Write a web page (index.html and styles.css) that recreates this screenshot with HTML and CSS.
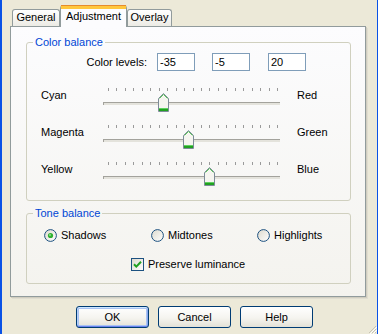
FILE: index.html
```html
<!DOCTYPE html>
<html lang="en">
<head>
    <meta charset="UTF-8">
    <title>Adjustment</title>
    <link rel="stylesheet" href="styles.css">
</head>
<body>

<div class="window">
    <!-- Tab strip -->
    <div class="tabs">
        <div class="tab tab-general">General</div>
        <div class="tab tab-active">Adjustment</div>
        <div class="tab tab-overlay">Overlay</div>
    </div>

    <div class="panel">
        <fieldset class="group color-group">
            <legend>Color balance</legend>

            <div class="levels">
                <span class="levels-label">Color levels:</span>
                <input class="level" type="text" value="-35">
                <input class="level level-2" type="text" value="-5">
                <input class="level level-3" type="text" value="20">
            </div>

            <div class="slider-row first">
                <span class="name">Cyan</span>
                <svg class="slider" width="180" height="26" viewBox="0 0 180 26">
                    <use href="#ticks"/>
                    <use href="#track"/>
                    <g transform="translate(55 0)"><use href="#thumb"/></g>
                </svg>
                <span class="name right">Red</span>
            </div>
            <div class="slider-row">
                <span class="name">Magenta</span>
                <svg class="slider" width="180" height="26" viewBox="0 0 180 26">
                    <use href="#ticks"/>
                    <use href="#track"/>
                    <g transform="translate(80 0)"><use href="#thumb"/></g>
                </svg>
                <span class="name right">Green</span>
            </div>
            <div class="slider-row">
                <span class="name">Yellow</span>
                <svg class="slider" width="180" height="26" viewBox="0 0 180 26">
                    <use href="#ticks"/>
                    <use href="#track"/>
                    <g transform="translate(101 0)"><use href="#thumb"/></g>
                </svg>
                <span class="name right">Blue</span>
            </div>
        </fieldset>

        <fieldset class="group tone-group">
            <legend>Tone balance</legend>
            <div class="radios">
                <label class="radio">
                    <svg width="13" height="13" viewBox="0 0 13 13"><use href="#radio"/><circle cx="6.5" cy="6.5" r="2.6" fill="#2fb12f"/><circle cx="6" cy="6" r="1" fill="#8fe08f"/></svg>
                    <span>Shadows</span>
                </label>
                <label class="radio">
                    <svg width="13" height="13" viewBox="0 0 13 13"><use href="#radio"/></svg>
                    <span>Midtones</span>
                </label>
                <label class="radio">
                    <svg width="13" height="13" viewBox="0 0 13 13"><use href="#radio"/></svg>
                    <span>Highlights</span>
                </label>
            </div>
            <label class="check">
                <svg width="13" height="13" viewBox="0 0 13 13">
                    <rect x="0.5" y="0.5" width="12" height="12" fill="url(#boxfill)" stroke="#1c5180"/>
                    <path d="M3 6.2 L5.3 8.6 L10 3.8" fill="none" stroke="#21a121" stroke-width="2"/>
                </svg>
                <span>Preserve luminance</span>
            </label>
        </fieldset>
    </div>

    <div class="buttons">
        <button class="btn btn-default">OK</button>
        <button class="btn">Cancel</button>
        <button class="btn">Help</button>
    </div>

    <svg class="grip" width="10" height="10" viewBox="0 0 10 10">
        <path d="M9 2 L2 9 M9 5 L5 9 M9 8 L8 9" stroke="#c6c3b4" stroke-width="1"/>
        <path d="M10 3 L3 10 M10 6 L6 10" stroke="#ffffff" stroke-width="1"/>
    </svg>
</div>

<!-- shared shapes -->
<svg class="defs" width="0" height="0">
    <defs>
        <linearGradient id="boxfill" x1="0" y1="0" x2="1" y2="1">
            <stop offset="0" stop-color="#dcd9cd"/>
            <stop offset="1" stop-color="#ffffff"/>
        </linearGradient>
        <g id="radio">
            <circle cx="6.5" cy="6.5" r="5.9" fill="url(#boxfill)" stroke="#1c5180"/>
        </g>
        <g id="ticks" fill="#9a9a9a">
            <rect x="5" y="1" width="1" height="3"/>
            <rect x="13" y="1" width="1" height="3"/>
            <rect x="22" y="1" width="1" height="3"/>
            <rect x="30" y="1" width="1" height="3"/>
            <rect x="39" y="1" width="1" height="3"/>
            <rect x="47" y="1" width="1" height="3"/>
            <rect x="56" y="1" width="1" height="3"/>
            <rect x="64" y="1" width="1" height="3"/>
            <rect x="73" y="1" width="1" height="3"/>
            <rect x="81" y="1" width="1" height="3"/>
            <rect x="90" y="1" width="1" height="3"/>
            <rect x="98" y="1" width="1" height="3"/>
            <rect x="106" y="1" width="1" height="3"/>
            <rect x="115" y="1" width="1" height="3"/>
            <rect x="123" y="1" width="1" height="3"/>
            <rect x="132" y="1" width="1" height="3"/>
            <rect x="140" y="1" width="1" height="3"/>
            <rect x="149" y="1" width="1" height="3"/>
            <rect x="157" y="1" width="1" height="3"/>
            <rect x="166" y="1" width="1" height="3"/>
            <rect x="174" y="1" width="1" height="3"/>
        </g>
        <g id="track">
            <rect x="0" y="15" width="177" height="1" fill="#a3a29c"/>
            <rect x="0" y="16" width="177" height="2" fill="#e4e3dc"/>
            <rect x="0" y="15" width="1" height="3" fill="#a3a29c"/>
        </g>
        <g id="thumb">
            <path d="M0.5 11.5 L5.5 6.5 L10.5 11.5 V24.5 H0.5 Z" fill="#f6f5f0" stroke="#7d8b98"/>
            <path d="M1.5 11.5 L5.5 7.5 L9.5 11.5" fill="none" stroke="#5cc85c"/>
            <rect x="1" y="21" width="9" height="1" fill="#5fd15f"/>
            <rect x="1" y="22" width="9" height="2" fill="#21a121"/>
        </g>
    </defs>
</svg>

</body>
</html>
```

FILE: styles.css
```css
body {
    margin: 0;
    padding: 0;
    font-family: 'Liberation Sans', Arial, sans-serif;
    font-size: 11px;
    color: #000;
    background: #ece9d8;
}

.window {
    position: relative;
    box-sizing: border-box;
    width: 378px;
    height: 334px;
    padding-top: 5px;
    background: #ece9d8;
    border-left: 2px solid #0a52e6;
    border-right: 1px solid #0a52e6;
    overflow: hidden;
}

/* Tabs */
.tabs {
    display: flex;
    align-items: flex-end;
    height: 21px;
    margin-left: 10px;
}

.tab {
    box-sizing: border-box;
    height: 17px;
    padding-top: 1px;
    line-height: 13px;
    text-align: center;
    border: 1px solid #919b9c;
    border-bottom: none;
    border-radius: 3px 3px 0 0;
    background: linear-gradient(#ffffff, #ecebe5);
}

.tab-general {
    width: 48px;
}

.tab-overlay {
    width: 45px;
}

.tab-active {
    position: relative;
    z-index: 1;
    width: 67px;
    height: 22px;
    margin-bottom: -1px;
    padding-top: 2px;
    border-top: 3px solid #ffc73c;
    box-shadow: inset 0 1px 0 #ffc73c;
    background: #fcfcfe;
    border-radius: 3px 3px 0 0;
}

.tab-active::before {
    content: "";
    position: absolute;
    left: 0;
    right: 0;
    top: -3px;
    height: 1px;
    background: #e68b2c;
}

/* Panel */
.panel {
    box-sizing: border-box;
    width: 356px;
    height: 271px;
    margin-left: 8px;
    padding: 0 0 0 15px;
    border: 1px solid #919b9c;
    background: linear-gradient(#fcfcfe, #f4f3ee);
    box-shadow: 1px 1px 0 #d0cdbf, 2px 2px 0 #e0ddd0;
}

.group {
    box-sizing: border-box;
    width: 325px;
    margin: 0;
    padding: 0;
    border: 1px solid #d0d0bf;
    border-radius: 3px;
}

.group legend {
    margin-left: 6px;
    padding: 0 2px;
    line-height: 13px;
    color: #0046d5;
}

.color-group {
    margin-top: 9px;
    padding-bottom: 13px;
}

.tone-group {
    margin-top: 6px;
    padding-bottom: 12px;
}

/* Color levels */
.levels {
    display: flex;
    align-items: center;
    margin-top: 4px;
}

.levels-label {
    width: 120px;
    margin-right: 10px;
    text-align: right;
}

.level {
    box-sizing: border-box;
    width: 38px;
    height: 18px;
    margin: 0;
    padding: 0 2px;
    border: 1px solid #7f9db9;
    background: #fff;
    font-family: inherit;
    font-size: 11px;
    color: #000;
}

.level-2 {
    margin-left: 17px;
}

.level-3 {
    margin-left: 18px;
}

/* Sliders */
.slider-row {
    display: grid;
    grid-template-columns: 62px 180px auto;
    height: 26px;
    margin-top: 11px;
    padding-left: 14px;
}

.slider-row.first {
    margin-top: 16px;
}

.slider-row .name {
    padding-top: 2px;
    line-height: 13px;
}

.slider-row .right {
    padding-left: 14px;
}

.slider {
    display: block;
}

/* Tone balance */
.radios {
    display: grid;
    grid-template-columns: 107px 106px auto;
    margin-top: 9px;
    padding-left: 17px;
}

.radio,
.check {
    display: flex;
    align-items: center;
    height: 13px;
    line-height: 13px;
}

.radio svg,
.check svg {
    display: block;
    flex: none;
    margin-right: 4px;
}

.check {
    margin-top: 16px;
    padding-left: 104px;
}

/* Buttons */
.buttons {
    display: flex;
    gap: 9px;
    margin-top: 9px;
    margin-left: 74px;
}

.btn {
    box-sizing: border-box;
    width: 73px;
    height: 22px;
    padding: 0;
    border: 1px solid #003c74;
    border-radius: 3px;
    background: linear-gradient(#ffffff 0%, #f5f4ef 55%, #e3e1d7 100%);
    font-family: inherit;
    font-size: 11px;
    color: #000;
}

.btn-default {
    box-shadow: inset 0 1px 0 #cee7ff, inset 0 -1px 0 #6982ee, inset 1px 0 0 #b6cff8, inset -1px 0 0 #8aa8ee, inset 0 0 0 2px #a9c3f3;
}

.grip {
    position: absolute;
    right: 0;
    bottom: 0;
}

.defs {
    position: absolute;
}
```
